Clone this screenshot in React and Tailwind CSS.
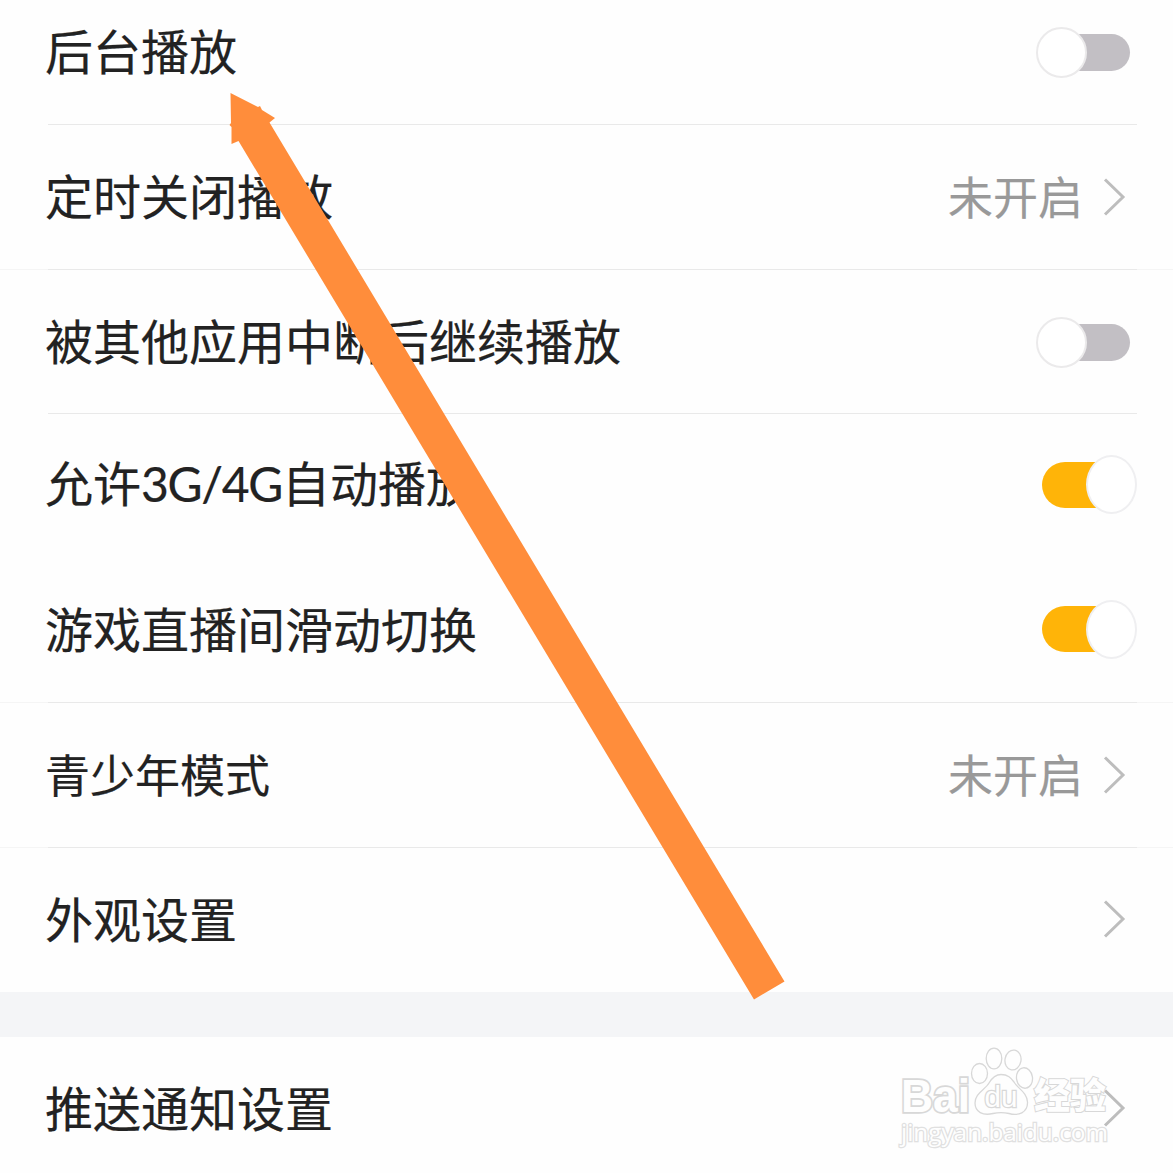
import React, { useState } from 'react';

const SETTINGS = [
  { id: 'background', label: '后台播放', type: 'switch', height: 'h-[145px]', divider: 'inset' },
  { id: 'timer', label: '定时关闭播放', type: 'link', value: '未开启', height: 'h-[145px]', divider: 'full' },
  { id: 'resume', label: '被其他应用中断后继续播放', type: 'switch', height: 'h-[144px]', divider: 'inset' },
  {
    id: 'mobile',
    label: <>允许<span className="font-['Lato'] tracking-[-1.3px]">3G/4G</span>自动播放</>,
    type: 'switch',
    height: 'h-[144px]',
  },
  { id: 'swipe', label: '游戏直播间滑动切换', type: 'switch', height: 'h-[145px]', divider: 'full' },
  { id: 'teen', label: '青少年模式', type: 'link', value: '未开启', height: 'h-[145px]', divider: 'full', small: true },
  { id: 'appearance', label: '外观设置', type: 'link', height: 'h-[144px]' },
];

function Switch({ checked, onChange }) {
  if (checked) {
    return (
      <button onClick={onChange} className="flex items-center w-[95px] h-[60px] mb-[3px] shrink-0">
        <span className="w-[64px] h-[46px] shrink-0 rounded-l-full bg-[#ffb408]" />
        <span className="w-[51px] h-[59px] shrink-0 -ml-5 rounded-[50%] bg-white border-2 border-[#efeff1]" />
      </button>
    );
  }
  return (
    <button onClick={onChange} className="flex items-center w-[101px] h-[60px] shrink-0">
      <span className="w-[51px] h-[51px] shrink-0 rounded-full bg-white border-2 border-[#ebeaeb] z-1" />
      <span className="w-[63px] h-[37px] shrink-0 -ml-5 rounded-r-full bg-[#c2bfc4]" />
    </button>
  );
}

function Chevron() {
  return (
    <svg width="24" height="40" viewBox="0 0 24 40" fill="none" className="mr-[10px] mb-0.5 shrink-0">
      <path d="M2 2.5L20 20L2 37.5" stroke="#bdbdbd" strokeWidth="3" />
    </svg>
  );
}

function Row({ item, checked, onToggle }) {
  return (
    <div className={`relative flex items-center justify-between pl-[45px] pr-9 ${item.height}`}>
      <span className={item.small ? 'pb-1 text-[45px] leading-none' : 'pb-[7px] text-[48px] leading-none'}>
        {item.label}
      </span>
      {item.type === 'switch' ? (
        <Switch checked={checked} onChange={onToggle} />
      ) : (
        <div className="flex items-center gap-5">
          {item.value && <span className="pb-1 text-[45px] leading-none text-[#999]">{item.value}</span>}
          <Chevron />
        </div>
      )}
      {item.divider === 'full' && <div className="absolute bottom-0 left-0 right-0 h-px bg-[#f5f5f5]" />}
      {item.divider && <div className="absolute bottom-0 left-12 right-9 h-px bg-[#e9e9e9]" />}
    </div>
  );
}

function Watermark() {
  return (
    <svg width="220" height="110" viewBox="0 0 220 110" className="absolute left-[895px] top-[1043px] pointer-events-none">
      <g fill="#fefefe" stroke="#d8d8d8" strokeWidth="1.3">
        <ellipse cx="84.5" cy="30.5" rx="8" ry="10" />
        <ellipse cx="99" cy="15.5" rx="7.8" ry="10.3" />
        <ellipse cx="118" cy="17" rx="8" ry="10" transform="rotate(10 118 17)" />
        <ellipse cx="129.5" cy="35" rx="8" ry="10.3" transform="rotate(-8 129.5 35)" />
        <path d="M106 31.500C113 31.500 116 35 119 39C123 46 132 49 132.500 59C133 70 123 73 114 70.500C109 69.500 103 69.500 98 70.500C88 73 80 69 80 60C80 50 90 47 94 40C97 35 100 31.500 106 31.500Z" />
        <text x="6" y="69" fontSize="46" fontFamily="'Liberation Sans', sans-serif" fontWeight="700" strokeWidth="3.5" paintOrder="stroke" textLength="69" lengthAdjust="spacingAndGlyphs">Bai</text>
        <text x="89.500" y="64" fontSize="29" fontFamily="'Liberation Sans', sans-serif" strokeWidth="2.5" paintOrder="stroke" textLength="33" lengthAdjust="spacingAndGlyphs">du</text>
        <text x="139" y="66" fontSize="36" fontWeight="900" fontFamily="'Noto Sans CJK SC', sans-serif" strokeWidth="2" paintOrder="stroke" textLength="72" lengthAdjust="spacingAndGlyphs">经验</text>
        <text x="6" y="97.500" fontSize="24" fontFamily="'Open Sans', sans-serif" stroke="#e0e0e0" strokeWidth="2.500" paintOrder="stroke" textLength="207" lengthAdjust="spacingAndGlyphs">jingyan.baidu.com</text>
      </g>
    </svg>
  );
}

function App() {
  const [enabled, setEnabled] = useState({ background: false, resume: false, mobile: true, swipe: true });

  const toggle = (id) => {
    setEnabled({ ...enabled, [id]: !enabled[id] });
  };

  return (
    <div className="relative w-[1173px] h-[1173px] overflow-hidden bg-[#fefefe] text-[#222] font-['Noto_Sans_CJK_SC',sans-serif]">
      <div className="-mt-5 [-webkit-text-stroke:0.2px]">
        {SETTINGS.map((item) => (
          <Row key={item.id} item={item} checked={enabled[item.id]} onToggle={() => toggle(item.id)} />
        ))}
      </div>
      <div className="h-[45px] bg-[#f4f5f7]" />
      <div className="[-webkit-text-stroke:0.2px]">
        <Row item={{ label: '推送通知设置', type: 'link', height: 'h-[144px]' }} />
      </div>

      {/* pointer towards the first setting */}
      <svg width="1173" height="1173" viewBox="0 0 1173 1173" className="absolute left-0 top-0 pointer-events-none">
        <path d="M230.500 93L258 107L260 106L262 110L275 118L269.500 122.500L784.500 981.500L754 999.500L238.500 141L231.500 144L231.500 127L229.500 125L231 123Z" fill="#ff8d3b" />
      </svg>
      <Watermark />
    </div>
  );
}

export default App;
